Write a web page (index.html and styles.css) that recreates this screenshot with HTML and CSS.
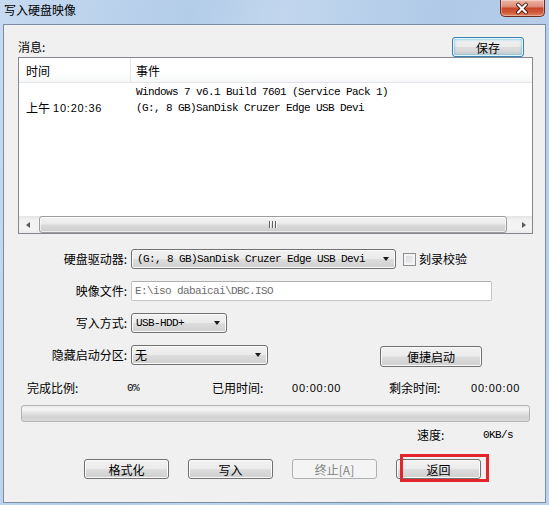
FILE: index.html
```html
<!DOCTYPE html>
<html lang="zh-CN">
<head>
<meta charset="utf-8">
<title>写入硬盘映像</title>
<link rel="stylesheet" href="styles.css">
</head>
<body>
<div class="window">
  <div class="titlebar">
    <span class="title">写入硬盘映像</span>
    <div class="close">
      <svg width="45" height="17" viewBox="0 0 45 17">
        <path d="M18.5 4.5 L26.5 12.5 M26.5 4.5 L18.5 12.5" stroke="#4a1a12" stroke-width="4.2" stroke-linecap="round" fill="none"/>
        <path d="M18.5 4.5 L26.5 12.5 M26.5 4.5 L18.5 12.5" stroke="#ffffff" stroke-width="2.2" stroke-linecap="round" fill="none"/>
      </svg>
    </div>
  </div>
  <div class="client">
    <div class="msg-row">
      <span>消息:</span>
      <button class="btn default save">保存</button>
    </div>
    <div class="listview">
      <div class="lv-header">
        <div class="c1">时间</div>
        <div class="c2">事件</div>
      </div>
      <div class="lv-body">
        <div class="lv-row"><div class="c1"></div><div class="c2 mono">Windows 7 v6.1 Build 7601 (Service Pack 1)</div></div>
        <div class="lv-row"><div class="c1"><span>上午</span><span class="time">10:20:36</span></div><div class="c2 mono">(G:, 8 GB)SanDisk Cruzer Edge USB Devi</div></div>
      </div>
      <div class="hscroll">
        <span class="sarrow"><span class="tri-left"></span></span>
        <div class="track"><div class="thumb"><span class="grip"></span></div></div>
        <span class="sarrow"><span class="tri-right"></span></span>
      </div>
    </div>
    <div class="form">
      <div class="frow">
        <span class="flabel">硬盘驱动器:</span>
        <div class="combo w-drive"><span class="mono">(G:, 8 GB)SanDisk Cruzer Edge USB Devi</span><span class="tri-down"></span></div>
        <span class="checkbox"></span>
        <span class="cblabel">刻录校验</span>
      </div>
      <div class="frow">
        <span class="flabel">映像文件:</span>
        <div class="textbox"><span class="mono">E:\iso dabaicai\DBC.ISO</span></div>
      </div>
      <div class="frow">
        <span class="flabel">写入方式:</span>
        <div class="combo w-mode"><span class="mono">USB-HDD+</span><span class="tri-down"></span></div>
      </div>
      <div class="frow">
        <span class="flabel">隐藏启动分区:</span>
        <div class="combo w-hide"><span>无</span><span class="tri-down"></span></div>
        <button class="btn quick">便捷启动</button>
      </div>
    </div>
    <div class="stats">
      <span>完成比例:</span>
      <span class="mono">0%</span>
      <span>已用时间:</span>
      <span class="time">00:00:00</span>
      <span>剩余时间:</span>
      <span class="time">00:00:00</span>
    </div>
    <div class="progress"></div>
    <div class="speed">
      <span class="speed-label">速度:</span>
      <span class="mono">0KB/s</span>
    </div>
    <div class="actions">
      <button class="btn act">格式化</button>
      <button class="btn act">写入</button>
      <button class="btn act disabled">终止[A]</button>
      <button class="btn act back">返回<span class="annot"></span></button>
    </div>
  </div>
</div>
</body>
</html>
```

FILE: styles.css
```css
* { box-sizing: border-box; }
html, body { margin: 0; padding: 0; }
body {
  width: 549px;
  height: 505px;
  overflow: hidden;
  background: #bcd2ec;
  font-family: "Noto Sans CJK SC", "Microsoft YaHei", sans-serif;
  font-size: 12px;
  color: #000;
}
.window {
  width: 549px;
  height: 505px;
  display: flex;
  flex-direction: column;
  background: linear-gradient(100deg, #c6daf0 0%, #b3cce8 30%, #c2d7ee 45%, #afc9e7 70%, #bcd2ec 100%);
}
.titlebar {
  height: 24px;
  display: flex;
  align-items: flex-start;
  flex-shrink: 0;
}
.title {
  padding-left: 4px;
  line-height: 20px;
  font-size: 12px;
  color: #000;
}
.close {
  margin-left: auto;
  margin-right: 4px;
  width: 45px;
  height: 17px;
  border: 1px solid #6e2c20;
  border-top: none;
  border-radius: 0 0 5px 5px;
  background: linear-gradient(#ebb4a6 0%, #df8f7b 40%, #c9482c 52%, #cf5636 75%, #e08463 100%);
  box-shadow: inset 0 0 0 1px rgba(255,255,255,0.35);
  display: flex;
  align-items: center;
  justify-content: center;
}
.close svg { display: block; margin-left: -1px; }
.client {
  flex: 1;
  margin: 0 3px 2px 3px;
  border: 1px solid #7b8ca3;
  background: #f0f0f0;
  display: flex;
  flex-direction: column;
}
.mono {
  font-family: "Liberation Mono", "Courier New", monospace;
  font-size: 11px;
  letter-spacing: -0.6px;
  white-space: pre;
}
.time {
  font-family: "Liberation Sans", Arial, sans-serif;
  font-size: 11px;
  letter-spacing: 0.8px;
}

/* message row */
.msg-row {
  margin-top: 12px;
  height: 20px;
  padding: 0 21px 0 14px;
  display: flex;
  align-items: center;
  line-height: 20px;
}
.btn {
  height: 20px;
  padding: 0;
  border: 1px solid #707070;
  border-radius: 3px;
  background: linear-gradient(#f2f2f2 0%, #ebebeb 48%, #dddddd 52%, #cfcfcf 100%);
  box-shadow: inset 0 0 0 1px #fbfbfb;
  font-family: "Noto Sans CJK SC", "Microsoft YaHei", sans-serif;
  font-size: 12px;
  line-height: 17px;
  color: #000;
  position: relative;
}
.btn.default {
  border-color: #3c7fb1;
  box-shadow: inset 0 0 0 1px #e4f4fc, inset 0 0 2px 2px rgba(90,190,235,0.55);
}
.save { margin-left: auto; width: 72px; }

/* list view */
.listview {
  margin-left: 14px;
  width: 515px;
  height: 177px;
  border: 1px solid #828790;
  background: #fff;
  display: flex;
  flex-direction: column;
}
.lv-header {
  height: 25px;
  flex-shrink: 0;
  display: flex;
  border-bottom: 1px solid #e2e4e7;
  background: linear-gradient(#ffffff 0%, #ffffff 60%, #f6f7f8 100%);
  line-height: 25px;
}
.lv-header .c1 { border-right: 1px solid #e5e5e5; }
.c1 {
  width: 112px;
  padding-left: 7px;
  flex-shrink: 0;
  display: flex;
  gap: 3px;
  align-items: center;
}
.c2 { padding-left: 5px; }
.lv-body {
  flex: 1;
  padding-top: 1px;
}
.lv-row {
  height: 16px;
  display: flex;
  align-items: center;
  line-height: 16px;
}
.hscroll {
  height: 17px;
  flex-shrink: 0;
  display: flex;
  background: linear-gradient(#e4e4e4 0%, #f2f2f2 25%, #f4f4f4 75%, #e9e9e9 100%);
}
.sarrow {
  width: 17px;
  display: flex;
  align-items: center;
  justify-content: center;
}
.tri-left {
  width: 0; height: 0;
  border-top: 3.5px solid transparent;
  border-bottom: 3.5px solid transparent;
  border-right: 4px solid #5a5a5a;
}
.tri-right {
  width: 0; height: 0;
  border-top: 3.5px solid transparent;
  border-bottom: 3.5px solid transparent;
  border-left: 4px solid #5a5a5a;
}
.track { flex: 1; display: flex; align-items: stretch; }
.thumb {
  margin-left: 3px;
  width: 468px;
  border: 1px solid #9d9d9d;
  border-radius: 3px;
  background: linear-gradient(#f5f5f5 0%, #e9e9e9 45%, #d9d9d9 55%, #cdcdcd 100%);
  box-shadow: inset 0 0 0 1px rgba(255,255,255,0.6);
  display: flex;
  align-items: center;
  justify-content: center;
}
.grip {
  width: 8px;
  height: 7px;
  background: repeating-linear-gradient(90deg, #5f5f5f 0 1px, #fafafa 1px 2px, transparent 2px 3px);
}

/* form */
.form {
  margin-top: 15px;
  display: flex;
  flex-direction: column;
  gap: 12px;
}
.frow {
  height: 20px;
  display: flex;
  align-items: center;
}
.flabel {
  width: 123px;
  margin-right: 4px;
  text-align: right;
  line-height: 20px;
}
.combo {
  height: 20px;
  border: 1px solid #707070;
  border-radius: 3px;
  background: linear-gradient(#f2f2f2 0%, #ebebeb 48%, #dddddd 52%, #cfcfcf 100%);
  box-shadow: inset 0 0 0 1px #fbfbfb;
  display: flex;
  align-items: center;
  padding-left: 5px;
  line-height: 18px;
}
.w-drive { width: 265px; }
.w-mode { width: 96px; padding-left: 4px; }
.w-hide { width: 137px; padding-left: 3px; }
.tri-down {
  margin-left: auto;
  margin-right: 6px;
  width: 0; height: 0;
  border-left: 3.5px solid transparent;
  border-right: 3.5px solid transparent;
  border-top: 4px solid #1a1a1a;
}
.checkbox {
  margin-left: 7px;
  width: 13px;
  height: 13px;
  border: 1px solid #8e8f8f;
  background: linear-gradient(135deg, #d4d7dc 0%, #f4f4f4 100%);
  box-shadow: inset 0 0 0 2px #f4f4f4;
}
.cblabel { margin-left: 3px; line-height: 20px; }
.textbox {
  width: 361px;
  height: 20px;
  border: 1px solid #c5c5c5;
  border-top-color: #b0b0b0;
  border-radius: 2px;
  background: #fff;
  display: flex;
  align-items: center;
  padding-left: 3px;
  color: #6d6d6d;
}
.quick {
  margin-left: 112px;
  margin-top: 2px;
  width: 102px;
  height: 21px;
}

/* stats */
.stats {
  margin-top: 15px;
  height: 16px;
  padding-left: 23px;
  display: grid;
  grid-template-columns: 100px 85px 80px 97px 82px auto;
  align-items: center;
  line-height: 16px;
}
.progress {
  margin: 9px 0 0 17px;
  width: 509px;
  height: 17px;
  border: 1px solid #b4b4b4;
  border-radius: 3px;
  background: linear-gradient(#e9e9e9 0%, #f7f7f7 20%, #e2e2e2 50%, #d2d2d2 75%, #dcdcdc 100%);
}
.speed {
  margin-top: 5px;
  height: 16px;
  padding-left: 413px;
  display: flex;
  align-items: center;
  line-height: 16px;
}
.speed-label { width: 66px; }

/* bottom buttons */
.actions {
  margin-top: 16px;
  padding-left: 80px;
  display: flex;
  gap: 19px;
}
.act { width: 85px; }
.btn.disabled {
  border-color: #adb2b5;
  background: #f4f4f4;
  box-shadow: none;
  color: #838383;
}
.annot {
  position: absolute;
  left: 3px;
  top: -6px;
  width: 89px;
  height: 28px;
  border: 3px solid #e4262c;
  pointer-events: none;
}
```
